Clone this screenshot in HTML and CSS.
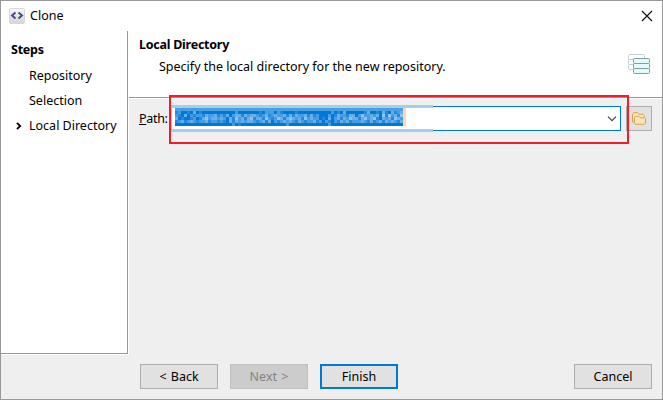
FILE: index.html
```html
<!DOCTYPE html>
<html lang="en">
<head>
<meta charset="utf-8">
<title>Clone</title>
<link rel="stylesheet" href="styles.css">
</head>
<body>
<div class="window">
  <header class="titlebar">
    <svg class="app-icon" width="16" height="16" viewBox="0 0 16 16"><defs><linearGradient id="ag" x2="0" y2="1"><stop stop-color="#f8f8f8"/><stop offset="1" stop-color="#d4d4d4"/></linearGradient></defs><rect x=".5" y=".5" width="15" height="15" rx="1" fill="url(#ag)" stroke="#d8d8d8"/><path d="M6.500 4.500L3 7.500l3.500 3M9.500 4.500L13 7.500l-3.500 3" fill="none" stroke="#454590" stroke-width="1.900"/></svg>
    <span class="title">Clone</span>
    <svg class="close" width="12" height="12" viewBox="0 0 12 12"><path d="M1 1l10 10M11 1L1 11" stroke="#111" stroke-width="1.200"/></svg>
  </header>
  <div class="main">
    <nav class="steps">
      <h2>Steps</h2>
      <div class="step">Repository</div>
      <div class="step">Selection</div>
      <div class="step current"><svg class="arrow" width="6" height="8" viewBox="0 0 6 8"><path d="M1 .8L4.200 4L1 7.200" fill="none" stroke="#000" stroke-width="1.800"/></svg>Local Directory</div>
    </nav>
    <section class="content">
      <div class="banner">
        <div><h1>Local Directory</h1><p>Specify the local directory for the new repository.</p></div>
        <svg class="list-icon" width="22" height="20" viewBox="0 0 22 20"><g fill="#fff" stroke="#c8cccc"><rect x=".5" y=".5" width="16" height="5" rx="1"/><rect x=".5" y="5.500" width="16" height="5" rx="1"/><rect x=".5" y="10.500" width="16" height="5" rx="1"/></g><g fill="#e2fafa" stroke="#849c9c"><rect x="5.500" y="4.500" width="16" height="5" rx="1"/><rect x="5.500" y="9.500" width="16" height="5" rx="1"/><rect x="5.500" y="14.500" width="16" height="5" rx="1"/></g></svg>
      </div>
      <div class="form">
        <label><u>P</u>ath:</label>
        <div class="combo">
          <svg class="mask" width="262" height="27" viewBox="0 0 262 27" shape-rendering="crispEdges"><path fill="#a3cfea" d="M0 0h262v3H0zM0 24h262v3H0zM0 3h1v21H0z"/><path fill="#fff" d="M1 3h3v21H1z"/><path fill="#4b9fe3" d="M4 3h228v3H4z"/><path fill="#0078d7" d="M4 6h228v15H4z"/><path fill="#ffd3b5" d="M232 3h3v18h-3z"/><g id="mosaic"></g></svg>
          <svg class="chevron" width="10" height="6" viewBox="0 0 10 6"><path d="M1 .7L5 4.700L9 .7" fill="none" stroke="#444" stroke-width="1.200"/></svg>
        </div>
        <button class="browse" aria-label="Browse"><svg width="14" height="13" viewBox="0 0 14 13"><g fill="#fbe5b4" stroke="#dca055"><path d="M.5 10V2L2 .6h3.500L7 2.300h4l1 1V10z"/><path d="M3.500 12.300L2.500 11V5.500l1-1.200H7l1.500 1.500h4l1 1V11l-1.200 1.300z"/></g></svg></button>
        <div class="highlight"></div>
      </div>
    </section>
  </div>
  <footer class="actions">
    <button class="back">&lt; Back</button><button disabled>Next &gt;</button><button class="primary">Finish</button><button class="cancel">Cancel</button>
  </footer>
</div>
<script src="mosaic.js"></script>
</body>
</html>
```
FILE: styles.css
```css
* { box-sizing: border-box; }
body { margin: 0; font: 12.5px "Noto Sans", sans-serif; color: #000; }
.window { width: 663px; height: 400px; border: 1px solid #999; background: #efefef; display: flex; flex-direction: column; }
.titlebar { height: 30px; background: #fff; display: flex; align-items: center; padding: 0 9px 0 8px; }
.app-icon { margin-top: -1px; }
.title { margin: -2px 0 0 5px; flex: 1; }
.close { margin-top: -1px; }
.main { height: 324px; display: flex; }
.steps { width: 127px; height: 323px; background: #fff; border: solid #999; border-width: 0 1px 1px 0; padding: 9px 0 0 9px; box-shadow: 1px 1px #fff; z-index: 1; }
h1, h2 { margin: 0; font-size: 12.5px; line-height: 20px; font-weight: 700; letter-spacing: -.25px; }
.steps h2 { padding-left: 1px; margin-bottom: 3px; }
.step { height: 25px; line-height: 25px; padding-left: 19px; position: relative; white-space: nowrap; }
.arrow { position: absolute; left: 6px; top: 9px; }
.content { flex: 1; min-width: 0; }
.banner { height: 67px; background: #fff; border-bottom: 1px solid #999; box-shadow: 0 1px #fff; padding: 4px 12px 0 11px; display: flex; justify-content: space-between; }
.banner p { margin: 2px 0 0 20px; line-height: 20px; }
.list-icon { margin-top: 19px; }
.form { position: relative; display: flex; align-items: center; padding: 8px 10px 0 11px; height: 33px; }
.form label { width: 33px; white-space: nowrap; letter-spacing: -.3px; }
.combo { width: 449px; height: 25px; border: 1px solid #0078d7; background: #fff; position: relative; }
.mask { position: absolute; left: -2px; top: -2px; }
.chevron { position: absolute; right: 3px; top: 9px; }
.browse { width: 26px; height: 25px; padding: 0; margin-left: auto; display: flex; align-items: center; justify-content: center; }
.highlight { position: absolute; left: 41px; top: -3px; width: 460px; height: 49px; border: 2px solid #f01c26; }
.actions { flex: 1; display: flex; gap: 12px; padding: 9px 10px 0 139px; }
button { font: inherit; color: #000; background: #e1e1e1; border: 1px solid #adadad; border-radius: 0; }
.actions button { width: 78px; height: 25px; padding: 0; }
.actions .back { word-spacing: 1px; }
button:disabled { background: #ccc; border-color: #bfbfbf; color: #838383; word-spacing: 1px; }
.actions .primary { border: 2px solid #0078d7; }
.actions .cancel { margin-left: auto; }
```
FILE: mosaic.js
```js
// Pixelated path: one digit per 3px cell, 0 = selection colour, 4 = lightest.
const rows = [
  "1030000020000000200000000000200000022000001000000000010110000000010000222032",
  "1200103010000000000020000000102220210000100000000000201030000001300103103123",
  "2103021221322312130233132332123123223131322313120002013221330242232304142314",
  "3010012013423323203142313413314212431343231423220103023132433134234103231432",
  "1231232122312212103132323321231302123232132122312021021323122232131231323213",
  "0000000000000000000201000000000000000200000000000002000000000000000000000000"
];
const shades = ["#0078d7", "#2488dc", "#489ce3", "#68afe6", "#8bc5ee"];
const group = document.getElementById("mosaic");
rows.slice(1).forEach((row, y) => {
  [...row].forEach((level, x) => {
    if (level === "0" || x > 75) return;
    const cell = document.createElementNS("http://www.w3.org/2000/svg", "rect");
    cell.setAttribute("x", 4 + x * 3);
    cell.setAttribute("y", 6 + y * 3);
    cell.setAttribute("width", 3);
    cell.setAttribute("height", 3);
    cell.setAttribute("fill", shades[level]);
    group.append(cell);
  });
});
```
